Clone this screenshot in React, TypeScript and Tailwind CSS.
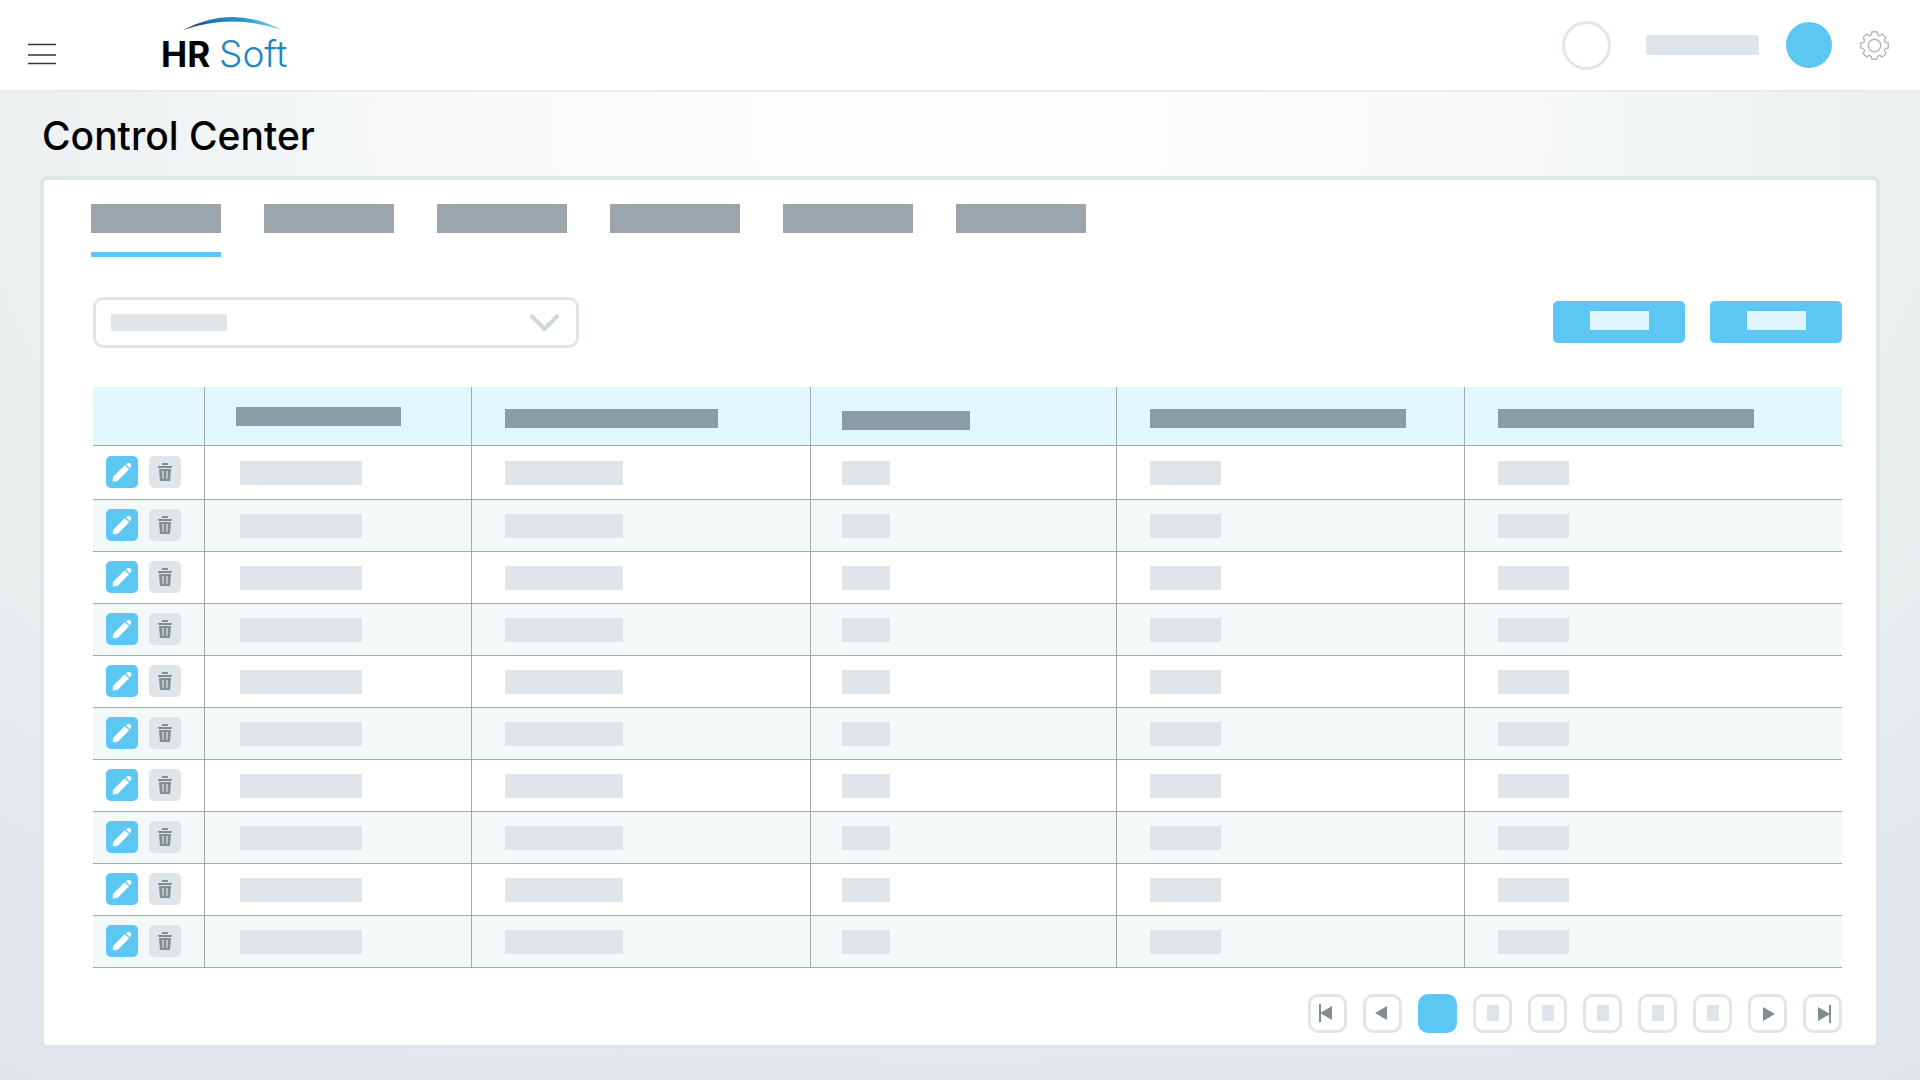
import type { ReactNode } from "react";

const tabs = ["Tab 1", "Tab 2", "Tab 3", "Tab 4", "Tab 5", "Tab 6"];

const columns = [
  { col: "w-[267px]", head: "w-[165px]", headPad: "pl-[31px]", cell: "w-[122px]", cellPad: "pl-[35px]" },
  { col: "w-[339px]", head: "w-[213px] mt-1", headPad: "pl-[33px]", cell: "w-[118px]", cellPad: "pl-[33px]" },
  { col: "w-[306px]", head: "w-[128px] mt-2", headPad: "pl-[31px]", cell: "w-[48px]", cellPad: "pl-[31px]" },
  { col: "w-[348px]", head: "w-[256px] mt-1", headPad: "pl-[33px]", cell: "w-[71px]", cellPad: "pl-[33px]" },
  { col: "", head: "w-[256px] mt-1", headPad: "pl-[33px]", cell: "w-[71px]", cellPad: "pl-[33px]" },
];

const rows = Array.from({ length: 10 }, (_, i) => i);
const pages = [2, 3, 4, 5, 6];

// eight flat teeth around a 31px box
function gearPath() {
  const at = (r: number, deg: number) => {
    const a = (deg * Math.PI) / 180;
    return `${(15.5 + r * Math.cos(a)).toFixed(2)} ${(15.5 + r * Math.sin(a)).toFixed(2)}`;
  };
  let d = "";
  for (let i = 0; i < 8; i++) {
    const c = i * 45;
    d += `${i === 0 ? "M" : "L"}${at(11.6, c - 15)} L${at(14, c - 11)} L${at(14, c + 11)} L${at(11.6, c + 15)} Q${at(10.4, c + 22.5)} ${at(11.6, c + 30)} `;
  }
  return d + "Z";
}

function Logo() {
  return (
    <svg className="h-[80px] w-[150px] overflow-visible" viewBox="157 5 150 80" role="img" aria-label="HRSoft">
      <defs>
        <linearGradient id="arc" x1="0" x2="1" y1="0" y2="0">
          <stop offset="0" stopColor="#1d2f66" />
          <stop offset="0.3" stopColor="#1c77b4" />
          <stop offset="0.6" stopColor="#2b93cd" />
          <stop offset="1" stopColor="#7fd3f5" />
        </linearGradient>
      </defs>
      <path d="M183 30 Q232 4 282 30 Q232 13 183 30Z" fill="url(#arc)" />
      <text x="161" y="67" fontSize="35" fontWeight="700" fill="#000" className="font-['Inter',sans-serif]">HR</text>
      <text x="219" y="67" fontSize="37" fontWeight="300" fill="#1f86c1" className="font-['Inter',sans-serif]">Soft</text>
    </svg>
  );
}

function PencilIcon() {
  return (
    <svg className="size-8" viewBox="0 0 32 32" fill="#fff">
      <path d="M7 25.2 7.6 20.8 18.8 9.4 22.8 13.4 11.8 24.4Z" stroke="#fff" strokeWidth="0.6" strokeLinejoin="round" />
      <path d="M20 8.2 Q22.6 5.8 24.8 7.8 Q26.2 10 24.1 12.2Z" />
    </svg>
  );
}

function TrashIcon() {
  return (
    <svg className="size-8" viewBox="0 0 32 32" fill="#838d92">
      <path d="M13 7h6v2h-6zM9 10h14v2H9z" />
      <path fillRule="evenodd" d="M10 13h12l-1 12H11zM13.2 15l.4 8h1v-8zM17.4 15v8h1l.4-8z" />
    </svg>
  );
}

function PageButton({ label, children }: { label: string; children: ReactNode }) {
  return (
    <button type="button" aria-label={label} className="size-[39px] shrink-0 rounded-[10px] border-3 border-[#e0e6e7] bg-white">
      <svg className="block size-[33px]" viewBox="3 3 33 33" fill="#838d91">
        {children}
      </svg>
    </button>
  );
}

function Header() {
  return (
    <header className="flex h-[92px] items-center justify-between border-b-2 border-[#e9ecec] bg-white pl-7 pr-[30px]">
      <div className="flex h-full items-center gap-[101px]">
        <button type="button" aria-label="Menu" className="mt-[17px]">
          <svg className="block h-[22px] w-7" viewBox="0 0 28 22" stroke="#333" strokeWidth="1.4">
            <path d="M0 1.5h28M0 12h28M0 20.5h28" />
          </svg>
        </button>
        <Logo />
      </div>
      <div className="flex items-center">
        <button type="button" aria-label="Notifications" className="size-[49px] rounded-full border-3 border-[#e1e6e7]" />
        <div className="ml-[35px] h-5 w-[113px] rounded-[3px] bg-[#dfe4e9]" />
        <button type="button" aria-label="Account" className="ml-[27px] size-[46px] rounded-full bg-[#5cc7f2]" />
        <button type="button" aria-label="Settings" className="ml-[27px]">
          <svg className="block size-[31px]" viewBox="0 0 31 31" fill="none" stroke="#b4b6b7" strokeWidth="1.4" strokeLinejoin="round">
            <path d={gearPath()} />
            <circle cx="15.5" cy="15.5" r="6.2" />
          </svg>
        </button>
      </div>
    </header>
  );
}

function DataTable() {
  return (
    <table className="mt-[39px] w-full table-fixed border-separate border-spacing-0">
      <colgroup>
        <col className="w-[112px]" />
        {columns.map((c, i) => (
          <col key={i} className={c.col} />
        ))}
      </colgroup>
      <thead>
        <tr className="bg-[#e1f7fe]">
          <th aria-label="Actions" className="h-[59px] border-b border-r border-[#9fa8ad] p-0" />
          {columns.map((c, i) => (
            <th key={i} aria-label={`Column ${i + 1}`} className={`h-[59px] border-b border-r border-[#9fa8ad] p-0 last:border-r-0 ${c.headPad}`}>
              <div className={`h-[19px] bg-[#889da8] ${c.head}`} />
            </th>
          ))}
        </tr>
      </thead>
      <tbody>
        {rows.map(row => (
          <tr key={row} className="h-[52px] first:h-[54px] even:bg-[#f3f8f9]">
            <td className="border-b border-r border-[#a2a8ab] p-0 pb-0.5 pl-[13px]">
              <div className="flex gap-[11px]">
                <button type="button" aria-label={`Edit row ${row + 1}`} className="size-8 rounded-[5px] bg-[#5cc7f2]">
                  <PencilIcon />
                </button>
                <button type="button" aria-label={`Delete row ${row + 1}`} className="size-8 rounded-[5px] bg-[#dfe5e8]">
                  <TrashIcon />
                </button>
              </div>
            </td>
            {columns.map((c, i) => (
              <td key={i} className={`border-b border-r border-[#a2a8ab] p-0 last:border-r-0 ${c.cellPad}`}>
                <div className={`h-6 bg-[#dfe4e9] ${c.cell}`} />
              </td>
            ))}
          </tr>
        ))}
      </tbody>
    </table>
  );
}

function Pagination() {
  return (
    <nav aria-label="Pagination" className="mt-[26px] flex justify-end gap-4">
      <PageButton label="First page">
        <path d="M11 10h2v18h-2zM12 19l12-7v14z" />
      </PageButton>
      <PageButton label="Previous page">
        <path d="M12 19l12-7v14z" />
      </PageButton>
      <button type="button" aria-label="Page 1" aria-current="page" className="size-[39px] rounded-[10px] bg-[#5cc7f2]" />
      {pages.map(page => (
        <PageButton key={page} label={`Page ${page}`}>
          <path d="M14 11h12v16H14z" fill="#dfe4e8" />
        </PageButton>
      ))}
      <PageButton label="Next page">
        <path d="M15 13l12 7-12 7z" />
      </PageButton>
      <PageButton label="Last page">
        <path d="M15 13l12 7-12 7zM26 11h2v18h-2z" />
      </PageButton>
    </nav>
  );
}

export default function App() {
  return (
    <div className="min-h-screen bg-[radial-gradient(1900px_1250px_at_50%_12%,#fdfdfd_8%,#f8fafb_26%,#ecf0f1_50%,#e3e9eb_76%,#dee3ea_100%)] font-['Inter',sans-serif]">
      <Header />
      <main className="px-10 pb-[31px]">
        <h1 className="flex h-[84px] items-center pl-0.5 pt-1 text-[39px] font-medium text-black">Control Center</h1>
        <section className="rounded-lg border-4 border-[#dfe6e9] bg-white pb-3 pl-[49px] pr-[34px] pt-6">
          <div role="tablist" className="-ml-0.5 flex gap-[43px]">
            {tabs.map((tab, i) => (
              <button key={tab} type="button" role="tab" aria-label={tab} aria-selected={i === 0} className="flex w-[130px] flex-col gap-[19px]">
                <span className="h-[29px] w-full bg-[#9ba5aa]" />
                <span className={`h-[5px] w-full ${i === 0 ? "bg-[#5cc7f2]" : "bg-transparent"}`} />
              </button>
            ))}
          </div>

          <div className="mt-10 flex items-center justify-between">
            <div className="relative w-[486px]">
              <select aria-label="Filter" className="block h-[51px] w-full appearance-none rounded-[10px] border-3 border-[#e0e5e6] bg-white">
                <option value="" />
              </select>
              <div className="pointer-events-none absolute inset-0 flex items-center justify-between pl-[18px] pr-[19px]">
                <div className="h-[17px] w-[116px] bg-[#dfe5e8]" />
                <svg className="h-5 w-[31px]" viewBox="0 0 31 20" fill="none" stroke="#ced8db" strokeWidth="4" strokeLinecap="round">
                  <path d="M3 3.5 15.5 16 28 3.5" />
                </svg>
              </div>
            </div>
            <div className="flex gap-[25px] pb-0.5">
              {["Action 1", "Action 2"].map(label => (
                <button key={label} type="button" aria-label={label} className="flex h-[42px] w-[132px] items-center justify-center rounded-[5px] bg-[#5cc7f2]">
                  <span className="mb-0.5 h-[19px] w-[59px] bg-[#e0f4fd]" />
                </button>
              ))}
            </div>
          </div>

          <DataTable />
          <Pagination />
        </section>
      </main>
    </div>
  );
}
